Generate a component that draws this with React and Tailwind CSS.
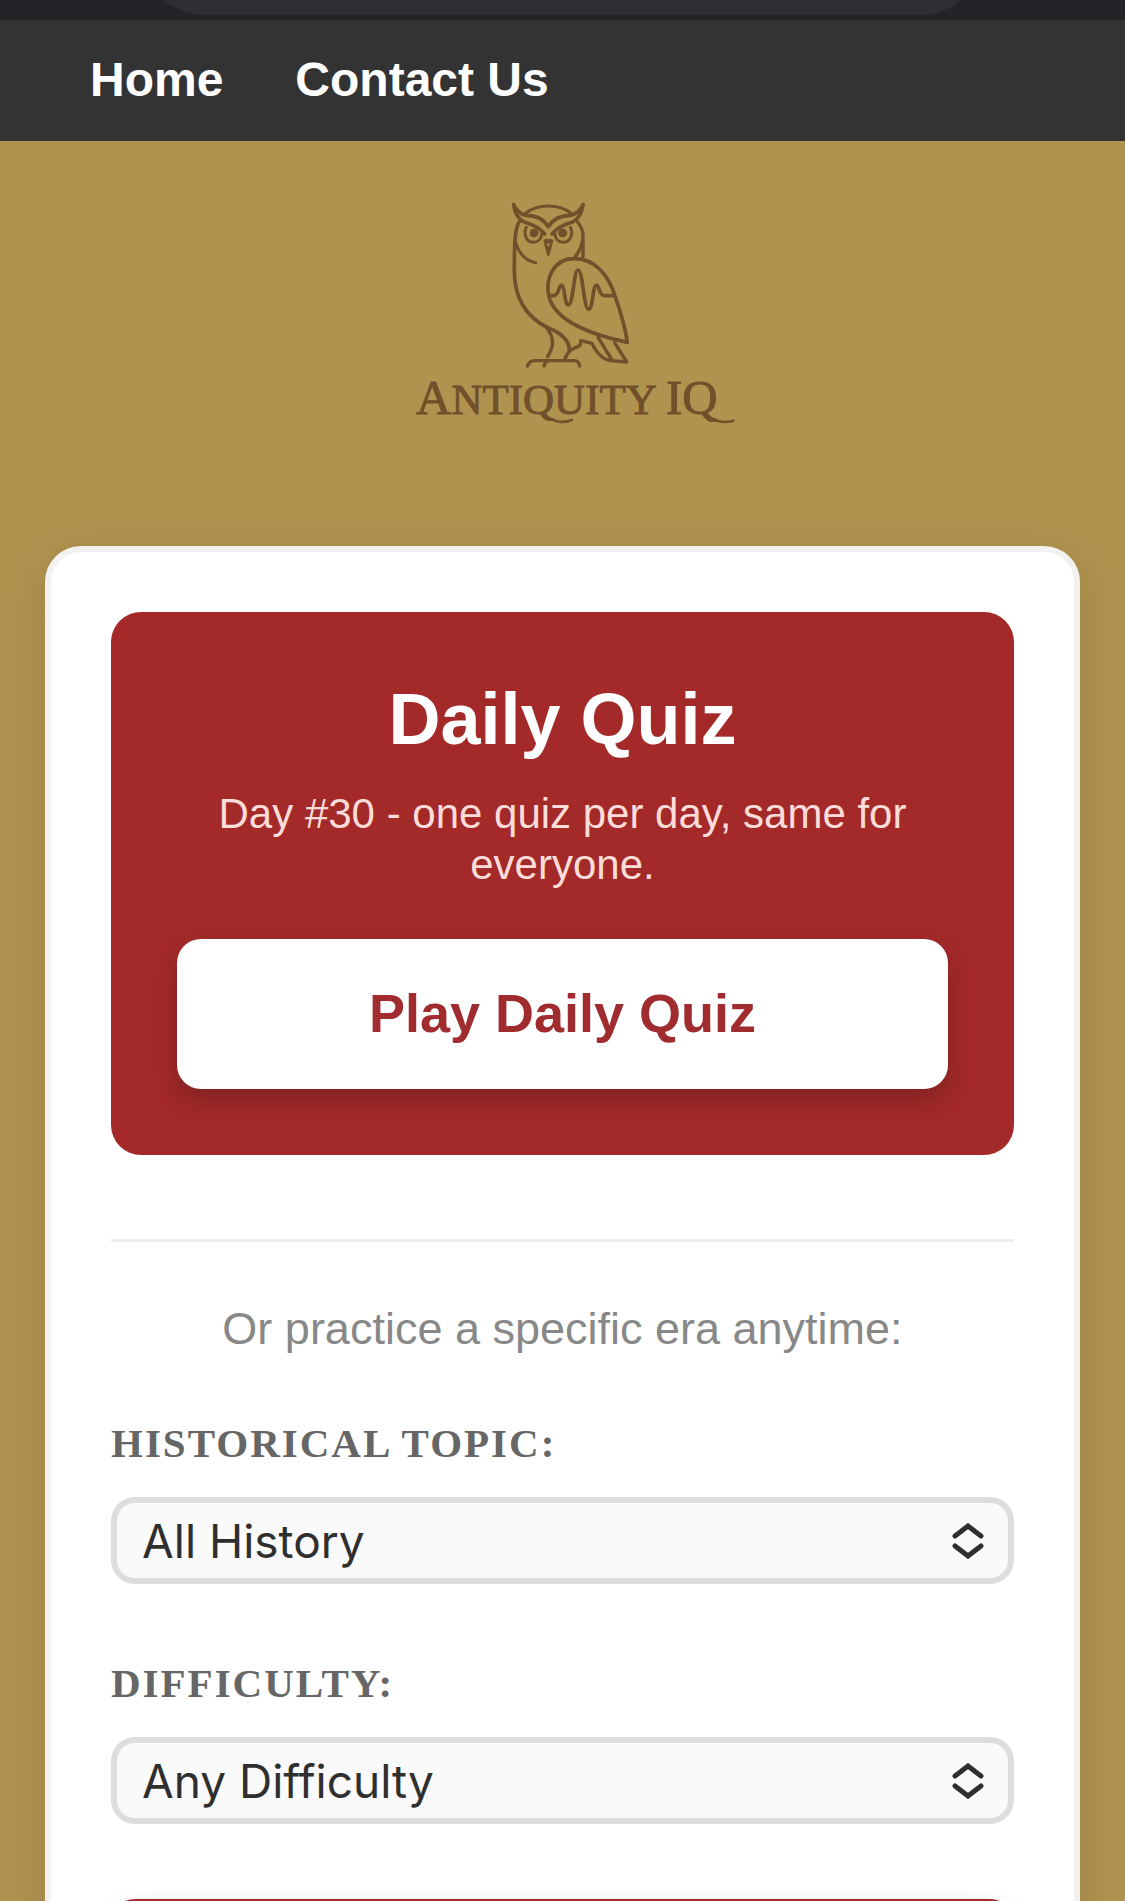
import React, { useState } from 'react';

const topics = ['All History', 'Ancient Egypt', 'Ancient Greece', 'Ancient Rome', 'Middle Ages'];
const difficulties = ['Any Difficulty', 'Easy', 'Medium', 'Hard'];

const Logo = () => (
    <svg
        viewBox="-36 0 1050 720"
        className="w-[350px] h-[240px]"
        role="img"
        aria-label="Antiquity IQ"
        fill="none"
        stroke="#71502b"
        strokeWidth="11"
        strokeLinecap="round"
        strokeLinejoin="round"
    >
        {/* Owl */}
        <g transform="translate(240 0)">
            {/* crown */}
            <path d="M136 70 C174 41 236 41 274 70" strokeWidth="9" />
            {/* brow and ear tufts */}
            <path d="M101 44 C108 60 122 72 138 76 C165 76 190 86 205 110 C220 86 245 76 272 76 C288 72 302 60 309 44" />
            <path d="M101 44 C104 72 114 86 132 96 C160 104 180 114 194 132" />
            <path d="M309 44 C306 72 296 86 278 96 C250 104 230 114 216 132" />
            {/* eyes */}
            <path d="M139 112 C129 130 139 157 160 157 C174 157 184 147 185 132" strokeWidth="9" />
            <path d="M271 112 C281 130 271 157 250 157 C236 157 226 147 225 132" strokeWidth="9" />
            <circle cx="162" cy="129" r="12" fill="#71502b" strokeWidth="3" />
            <circle cx="248" cy="129" r="12" fill="#71502b" strokeWidth="3" />
            {/* beak */}
            <path d="M194 152 L205 194 L216 152 M200 150 L205 158 L210 150 M205 172 V186" strokeWidth="8" />
            {/* head and chest */}
            <path d="M122 90 C104 108 103 160 103 230 C100 320 135 380 205 414 C245 430 270 450 268 484" />
            <path d="M106 155 C116 190 136 212 167 218" strokeWidth="9" />
            <path d="M288 90 C300 104 308 116 309 134 V200 M308 150 C304 172 296 188 284 202" strokeWidth="10" />
            {/* wing */}
            <path d="M207 320 C194 268 220 206 282 206 C345 204 388 260 405 318 C424 372 436 410 442 457 C340 436 226 395 207 320 Z" />
            <path d="M212 317 H222 C238 315 235 286 244 286 C255 286 253 345 265 345 C280 345 281 240 294 240 C309 240 311 358 326 358 C339 358 338 286 349 286 C359 286 356 315 372 317 H398" />
            {/* tail */}
            <path d="M303 452 L336 460 C348 486 364 508 392 512 L440 516 L404 458 M354 442 L396 510" strokeWidth="10" />
            {/* legs and perch */}
            <path d="M200 414 C226 446 220 470 203 500 M254 508 C266 474 286 476 300 466 L303 452" strokeWidth="10" />
            <path d="M142 528 C148 516 152 512 164 512 H284 C294 512 297 518 299 528 M192 528 C195 518 198 514 206 512" strokeWidth="10" />
        </g>

        {/* Wordmark */}
        <text x="48" y="673" fill="#71502b" strokeWidth="3" fontFamily="'Liberation Serif', serif" fontSize="129">
            <tspan fontSize="147">A</tspan>NTIQUITY <tspan fontSize="147">IQ</tspan>
        </text>
        <path d="M428 672 C450 690 485 704 516 690" strokeWidth="8" />
        <path d="M910 672 C935 690 965 703 1000 692" strokeWidth="8" />
    </svg>
);

const SelectField = ({ id, label, options, value, onChange }) => (
    <div>
        <label
            htmlFor={id}
            className="block font-['Liberation_Serif',serif] text-[41px] leading-12 font-bold tracking-[2px] uppercase text-[#666666]"
        >
            {label}
        </label>
        <div className="relative mt-[30px]">
            <select
                id={id}
                value={value}
                onChange={(e) => onChange(e.target.value)}
                className="block w-full h-[87px] appearance-none rounded-3xl border-6 border-[#dddddd] bg-[#fafafa] pl-[25px] pr-20 font-['Inter',sans-serif] text-[46px] leading-[72px] text-[#2f2f2f]"
            >
                {options.map((option) => (
                    <option key={option}>{option}</option>
                ))}
            </select>
            <svg
                viewBox="0 0 32 36"
                className="pointer-events-none absolute right-[30px] top-1/2 w-8 h-9 -translate-y-1/2"
                fill="none"
                stroke="#2f2f2f"
                strokeWidth="5"
                strokeLinecap="round"
                strokeLinejoin="miter"
                aria-hidden="true"
            >
                <path d="M3 13 L16 3 L29 13 M3 23 L16 33 L29 23" />
            </svg>
        </div>
    </div>
);

const App = () => {
    const [topic, setTopic] = useState(topics[0]);
    const [difficulty, setDifficulty] = useState(difficulties[0]);

    return (
        <div className="h-screen overflow-hidden bg-[#b0934f] font-['Liberation_Sans',Arial,sans-serif]">
            {/* Browser toolbar edge */}
            <div className="flex h-5 items-end overflow-hidden bg-[#232428] px-[140px] pb-[5px]">
                <div className="h-[132px] w-full shrink-0 rounded-full bg-[#2e2f33]"></div>
            </div>

            <nav className="flex h-[121px] items-center gap-[72px] bg-[#333333] px-[90px] pb-0.5 text-5xl font-bold text-white">
                <a href="#home">Home</a>
                <a href="#contact">Contact Us</a>
            </nav>

            <header className="flex justify-center pt-[49px] pb-[116px]">
                <Logo />
            </header>

            <main className="mx-[45px] rounded-[36px] border-6 border-[#f3f0f0] bg-white p-[60px] shadow-[0_12px_45px_rgba(0,0,0,0.12)]">
                <section className="rounded-[30px] bg-[#a32a29] p-[66px] text-center">
                    <h1 className="text-7xl leading-[82px] font-bold text-white">Daily Quiz</h1>
                    <p className="mt-7 text-[42px] leading-[51px] text-[#fbdcd8]">
                        Day #30 - one quiz per day, same for everyone.
                    </p>
                    <button
                        type="button"
                        className="mt-[49px] block h-[150px] w-full rounded-3xl bg-white pb-0.5 text-[54px] font-bold text-[#a02c2f] shadow-[0_12px_24px_rgba(0,0,0,0.2)]"
                    >
                        Play Daily Quiz
                    </button>
                </section>

                <hr className="mt-[84px] border-t-3 border-[#eeeeee]" />

                <p className="mt-15 text-center text-[45px] leading-[54px] text-[#888888]">
                    Or practice a specific era anytime:
                </p>

                <form className="mt-[63px] flex flex-col gap-[75px]" onSubmit={(e) => e.preventDefault()}>
                    <SelectField id="topic" label="Historical Topic:" options={topics} value={topic} onChange={setTopic} />
                    <SelectField id="difficulty" label="Difficulty:" options={difficulties} value={difficulty} onChange={setDifficulty} />
                    <button
                        type="submit"
                        aria-label="Start Quiz"
                        className="h-[150px] w-full rounded-3xl bg-[#a32a29] shadow-[0_12px_24px_rgba(0,0,0,0.2)]"
                    ></button>
                </form>
            </main>
        </div>
    );
};

export default App;
